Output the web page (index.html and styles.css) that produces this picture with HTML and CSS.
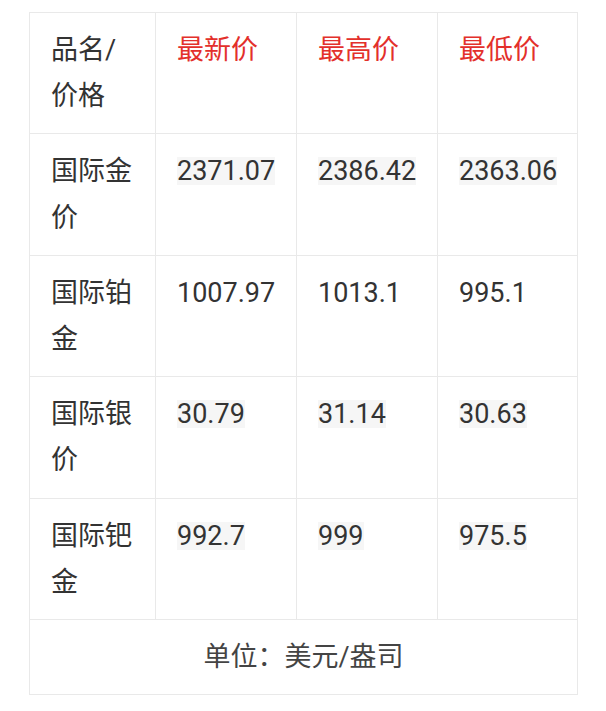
FILE: index.html
```html
<!DOCTYPE html>
<html lang="zh-CN">
<head>
<meta charset="utf-8">
<link rel="stylesheet" href="styles.css">
</head>
<body>
<table class="price-table">
  <colgroup>
    <col class="c1"><col class="c2"><col class="c3"><col class="c4">
  </colgroup>
  <thead>
    <tr>
      <th class="name">品名/价格</th>
      <th class="hot">最新价</th>
      <th class="hot">最高价</th>
      <th class="hot">最低价</th>
    </tr>
  </thead>
  <tbody>
    <tr>
      <td>国际金价</td>
      <td><span class="num">2371.07</span></td>
      <td><span class="num">2386.42</span></td>
      <td><span class="num">2363.06</span></td>
    </tr>
    <tr>
      <td>国际铂金</td>
      <td>1007.97</td>
      <td>1013.1</td>
      <td>995.1</td>
    </tr>
    <tr>
      <td>国际银价</td>
      <td><span class="num">30.79</span></td>
      <td><span class="num">31.14</span></td>
      <td><span class="num">30.63</span></td>
    </tr>
    <tr>
      <td>国际钯金</td>
      <td><span class="num">992.7</span></td>
      <td><span class="num">999</span></td>
      <td><span class="num">975.5</span></td>
    </tr>
    <tr>
      <td class="unit" colspan="4">单位：美元/盎司</td>
    </tr>
  </tbody>
</table>
</body>
</html>
```
FILE: styles.css
```css
html, body {
  margin: 0;
  padding: 0;
  background: #ffffff;
}
body {
  padding: 12px 0 0 29px;
  font-family: "Roboto", "Noto Sans CJK SC", sans-serif;
  color: #333333;
}
.price-table {
  border-collapse: collapse;
  table-layout: fixed;
  width: 548px;
  font-size: 27px;
  line-height: 46.2px;
}
.c1 { width: 126px; }
.c2 { width: 141px; }
.c3 { width: 141px; }
.c4 { width: 140px; }
.price-table th,
.price-table td {
  border: 1px solid #e9e9e9;
  padding: 14px 21px;
  text-align: left;
  vertical-align: top;
  font-weight: normal;
  white-space: normal;
}
.price-table th.hot {
  color: #e3302b;
}
.num {
  background: #f6f6f6;
  display: inline-block;
  line-height: 28px;
  white-space: nowrap;
}
.price-table td.unit {
  text-align: center;
  color: #444444;
}
```
